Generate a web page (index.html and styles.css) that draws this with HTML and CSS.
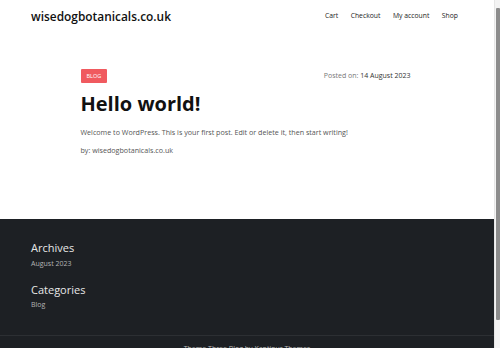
FILE: index.html
```html
<!DOCTYPE html>
<html>
<head>
<meta charset="utf-8">
<link rel="stylesheet" href="styles.css">
</head>
<body>
<header class="site-header">
  <a class="logo" href="#">wisedogbotanicals.co.uk</a>
  <nav class="menu">
    <a href="#">Cart</a>
    <a href="#">Checkout</a>
    <a href="#">My account</a>
    <a href="#">Shop</a>
  </nav>
</header>
<main class="content">
  <article class="post">
    <div class="post-meta">
      <span class="badge">Blog</span>
      <span class="posted">Posted on: <b>14 August 2023</b></span>
    </div>
    <h1 class="title">Hello world!</h1>
    <p class="text">Welcome to WordPress. This is your first post. Edit or delete it, then start writing!</p>
    <p class="text">by: wisedogbotanicals.co.uk</p>
  </article>
</main>
<footer class="site-footer">
  <div class="widgets">
    <section class="widget">
      <h2>Archives</h2>
      <a href="#">August 2023</a>
    </section>
    <section class="widget">
      <h2>Categories</h2>
      <a href="#">Blog</a>
    </section>
  </div>
  <div class="bottom">Theme Three Blog by Kantipur Themes</div>
</footer>
<div class="scrollbar" aria-hidden="true"><div class="thumb"></div></div>
</body>
</html>
```
FILE: styles.css
```css
html { background: #fff; }
body {
  margin: 0 6px 0 0;
  font-family: "Open Sans", sans-serif;
  background: #fff;
  color: #111;
}
a { text-decoration: none; color: inherit; }
.scrollbar {
  position: fixed;
  top: 0;
  right: 0;
  width: 6px;
  height: 100%;
  background: #f3f3f3;
  border-left: 1px solid #e6e6e6;
  box-sizing: border-box;
}
.thumb {
  margin: 8px 0 0 1px;
  width: 4px;
  height: 312px;
  background: #8c8c8c;
  border-radius: 1px;
}
.site-header {
  display: flex;
  justify-content: space-between;
  align-items: center;
  height: 32px;
  padding: 0 36px 0 31px;
}
.logo {
  font-size: 11.9px;
  font-weight: 600;
  line-height: 16px;
  color: #111;
}
.menu { display: flex; gap: 12.5px; font-size: 6.8px; line-height: 10px; color: #222; }
.content { padding: 37px 3px 64px 0; }
.post { width: 330px; margin: 0 auto; }
.post-meta { display: flex; justify-content: space-between; align-items: center; height: 14px; }
.badge {
  background: #f05a5f;
  color: #fff;
  font-size: 5.5px;
  line-height: 6px;
  text-transform: uppercase;
  padding: 4px 6px;
  border-radius: 1px;
}
.posted { font-size: 7px; line-height: 10px; color: #777; }
.posted b { font-weight: normal; color: #333; }
.title { font-size: 20px; font-weight: 700; line-height: 24px; margin: 9px 0 11px; color: #111; }
.text { font-size: 7.15px; line-height: 10px; color: #555; margin: 0 0 8px; }
.text:last-child { margin-bottom: 0; }
.site-footer { background: #1d2024; color: #ddd; }
.widgets { padding: 22px 31px 25px; }
.widget h2 { font-size: 11px; font-weight: 400; line-height: 14px; margin: 0 0 4px; color: #e8e8e8; }
.widget a { display: block; font-size: 7px; line-height: 10px; color: #b4b4b4; margin-bottom: 14px; }
.widget:last-child a { margin-bottom: 0; }
.widget:last-child h2 { margin-bottom: 3px; }
.bottom {
  border-top: 1px solid #2c2f33;
  text-align: center;
  font-size: 7px;
  line-height: 10px;
  color: #bbb;
  padding: 8px 0 10px;
}
```
